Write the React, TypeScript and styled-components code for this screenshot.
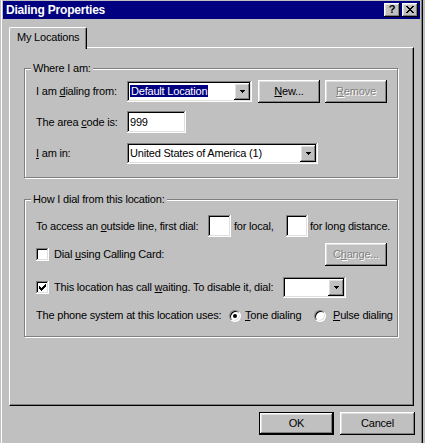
import React from "react";
import styled, { createGlobalStyle, css } from "styled-components";

const GlobalStyle = createGlobalStyle`
  html, body {
    margin: 0;
    padding: 0;
    background: #c0c0c0;
  }
  body {
    font-family: "Liberation Sans", Arial, sans-serif;
    font-size: 11px;
    letter-spacing: -0.2px;
    color: #000;
  }
  * {
    box-sizing: border-box;
  }
`;

const raised = css`
  box-shadow: inset -1px -1px #000, inset 1px 1px #fff, inset -2px -2px #808080,
    inset 2px 2px #dfdfdf;
`;

const sunken = css`
  box-shadow: inset -1px -1px #fff, inset 1px 1px #808080, inset -2px -2px #dfdfdf,
    inset 2px 2px #000;
`;

const Window = styled.div`
  width: 423px;
  height: 443px;
  overflow: hidden;
  background: #c0c0c0;
  padding: 1px 3px 0 3px;
  box-shadow: inset -1px 0 #000, inset -2px 0 #808080, inset 1px 0 #c0c0c0, inset 2px 0 #fff;
`;

const TitleBar = styled.div`
  height: 18px;
  background: #000080;
  color: #fff;
  display: flex;
  align-items: center;
  padding: 0 2px 0 3px;
`;

const Title = styled.span`
  flex: 1;
  font-size: 12px;
  font-weight: bold;
  letter-spacing: -0.2px;
`;

const CaptionButton = styled.div<{ $ml?: number }>`
  width: 16px;
  height: 14px;
  margin-left: ${(p) => p.$ml ?? 0}px;
  background: #c0c0c0;
  ${raised};
  display: flex;
  align-items: center;
  justify-content: center;
  color: #000;
  font-size: 11px;
  font-weight: bold;
  line-height: 1;
  padding-bottom: 1px;
`;

const Content = styled.div`
  padding: 8px 6px 0 6px;
`;

const TabStrip = styled.div`
  display: flex;
  height: 20px;
  position: relative;
  z-index: 1;
`;

const Tab = styled.div`
  width: 78px;
  height: 22px;
  background: #c0c0c0;
  border-top: 1px solid #fff;
  border-left: 1px solid #fff;
  border-right: 1px solid #000;
  border-top-left-radius: 2px;
  border-top-right-radius: 2px;
  box-shadow: inset -1px 0 #808080;
  padding: 3px 0 0 7px;
  line-height: 13px;
`;

const Panel = styled.div`
  height: 359px;
  border-top: 1px solid #fff;
  border-left: 1px solid #fff;
  border-right: 1px solid #000;
  border-bottom: 1px solid #000;
  box-shadow: inset -1px -1px #808080;
  padding: 20px 15px 0 14px;
`;

const Group = styled.div<{ $h: number; $mt?: number; $pt: number }>`
  position: relative;
  width: 374px;
  height: ${(p) => p.$h}px;
  margin-top: ${(p) => p.$mt ?? 0}px;
  border: 1px solid #808080;
  box-shadow: inset 1px 1px #fff, 1px 1px #fff;
  padding: ${(p) => p.$pt}px 10px 0 11px;
`;

const Legend = styled.span`
  position: absolute;
  top: -7px;
  left: 6px;
  padding: 0 2px;
  background: #c0c0c0;
  line-height: 13px;
  white-space: nowrap;
`;

const Row = styled.div<{ $h: number; $mt?: number }>`
  display: flex;
  align-items: center;
  height: ${(p) => p.$h}px;
  margin-top: ${(p) => p.$mt ?? 0}px;
`;

const Label = styled.span<{ $w?: number; $ml?: number }>`
  flex: none;
  white-space: nowrap;
  line-height: 13px;
  ${(p) => p.$w !== undefined && `width: ${p.$w}px;`}
  ${(p) => p.$ml !== undefined && `margin-left: ${p.$ml}px;`}
`;

const U = styled.span`
  text-decoration: underline;
  text-underline-offset: 1px;
`;

const Edit = styled.div<{ $w: number; $h?: number }>`
  flex: none;
  width: ${(p) => p.$w}px;
  height: ${(p) => p.$h ?? 21}px;
  background: #fff;
  ${sunken};
  display: flex;
  align-items: center;
  padding: 0 3px;
  line-height: 13px;
`;

const Combo = styled.div<{ $w: number; $ml?: number }>`
  flex: none;
  width: ${(p) => p.$w}px;
  height: 21px;
  margin-left: ${(p) => p.$ml ?? 0}px;
  background: #fff;
  ${sunken};
  display: flex;
  align-items: center;
  padding: 2px;
`;

const ComboText = styled.div`
  flex: 1;
  padding-left: 1px;
  line-height: 13px;
  white-space: nowrap;
  overflow: hidden;
`;

const Selected = styled.span`
  background: #000080;
  color: #fff;
  padding: 0 1px;
`;

const DropButton = styled.div`
  width: 16px;
  height: 17px;
  background: #c0c0c0;
  ${raised};
  display: flex;
  align-items: center;
  justify-content: center;
`;

const Button = styled.div<{ $w: number; $ml?: number; $disabled?: boolean; $default?: boolean }>`
  flex: none;
  width: ${(p) => p.$w}px;
  height: 23px;
  margin-left: ${(p) => (p.$ml === undefined ? "0" : p.$ml < 0 ? "auto" : `${p.$ml}px`)};
  background: #c0c0c0;
  ${raised};
  display: flex;
  align-items: center;
  justify-content: center;
  line-height: 13px;
  color: ${(p) => (p.$disabled ? "#808080" : "#000")};
  text-shadow: ${(p) => (p.$disabled ? "1px 1px 0 #fff" : "none")};
  ${(p) =>
    p.$default &&
    css`
      border: 1px solid #000;
    `}
`;

const CheckBox = styled.div`
  flex: none;
  width: 13px;
  height: 13px;
  background: #fff;
  ${sunken};
  display: flex;
  align-items: center;
  justify-content: center;
`;

const Radio = styled.div<{ $ml?: number }>`
  flex: none;
  width: 12px;
  height: 12px;
  margin-left: ${(p) => p.$ml ?? 0}px;
  border-radius: 50%;
  background: #fff;
  border: 1px solid;
  border-color: #808080 #fff #fff #808080;
  box-shadow: inset 1px 1px #000, inset -1px -1px #dfdfdf;
  display: flex;
  align-items: center;
  justify-content: center;
`;

const Dot = styled.div`
  width: 4px;
  height: 4px;
  border-radius: 50%;
  background: #000;
`;

const ButtonRow = styled.div`
  display: flex;
  justify-content: flex-end;
  gap: 6px;
  margin-top: 6px;
  margin-right: -1px;
`;

const pixels = (rows: string[]) =>
  rows.flatMap((r, y) =>
    r.split("").map((c, x) => (c === "X" ? <rect key={`${x}-${y}`} x={x} y={y} width={1} height={1} /> : null))
  );

const Glyph = ({ rows }: { rows: string[] }) => (
  <svg width={rows[0].length} height={rows.length} shapeRendering="crispEdges" fill="#000">
    {pixels(rows)}
  </svg>
);

const CLOSE = ["XX....XX", ".XX..XX.", "..XXXX..", "...XX...", "..XXXX..", ".XX..XX.", "XX....XX"];
const ARROW = ["XXXXX", ".XXX.", "..X.."];
const CHECK = ["......X", ".....XX", "X...XXX", "XX.XXX.", "XXXXX..", ".XXX...", "..X...."];

const Drop = () => (
  <DropButton>
    <Glyph rows={ARROW} />
  </DropButton>
);

const App: React.FC = () => {
  return (
    <>
      <GlobalStyle />
      <Window>
        <TitleBar>
          <Title>Dialing Properties</Title>
          <CaptionButton>?</CaptionButton>
          <CaptionButton $ml={2}>
            <Glyph rows={CLOSE} />
          </CaptionButton>
        </TitleBar>
        <Content>
          <TabStrip>
            <Tab>My Locations</Tab>
          </TabStrip>
          <Panel>
            <Group $h={110} $pt={11}>
              <Legend>Where I am:</Legend>
              <Row $h={23}>
                <Label $w={91}>
                  I am <U>d</U>ialing from:
                </Label>
                <Combo $w={125}>
                  <ComboText>
                    <Selected>Default Location</Selected>
                  </ComboText>
                  <Drop />
                </Combo>
                <Button $w={62} $ml={6}>
                  <span>
                    <U>N</U>ew...
                  </span>
                </Button>
                <Button $w={62} $ml={5} $disabled>
                  <span>
                    <U>R</U>emove
                  </span>
                </Button>
              </Row>
              <Row $h={22} $mt={8}>
                <Label $w={91}>
                  The area <U>c</U>ode is:
                </Label>
                <Edit $w={59} $h={22}>
                  999
                </Edit>
              </Row>
              <Row $h={21} $mt={10}>
                <Label $w={91}>
                  <U>I</U> am in:
                </Label>
                <Combo $w={191}>
                  <ComboText>United States of America (1)</ComboText>
                  <Drop />
                </Combo>
              </Row>
            </Group>

            <Group $h={138} $mt={21} $pt={15}>
              <Legend>How I dial from this location:</Legend>
              <Row $h={22}>
                <Label $w={172}>
                  To access an <U>o</U>utside line, first dial:
                </Label>
                <Edit $w={23} $h={22} />
                <Label $w={55} style={{ paddingLeft: 3 }}>
                  for local,
                </Label>
                <Edit $w={22} $h={22} />
                <Label $ml={2}>for long distance.</Label>
              </Row>
              <Row $h={23} $mt={6}>
                <CheckBox />
                <Label $ml={5}>
                  Dial <U>u</U>sing Calling Card:
                </Label>
                <Button $w={62} $ml={-1} $disabled>
                  <span>
                    C<U>h</U>ange...
                  </span>
                </Button>
              </Row>
              <Row $h={21} $mt={11}>
                <CheckBox>
                  <Glyph rows={CHECK} />
                </CheckBox>
                <Label $w={229} $ml={5}>
                  This location has call <U>w</U>aiting. To disable it, dial:
                </Label>
                <Combo $w={63}>
                  <ComboText />
                  <Drop />
                </Combo>
              </Row>
              <Row $h={13} $mt={11}>
                <Label $w={193}>The phone system at this location uses:</Label>
                <Radio>
                  <Dot />
                </Radio>
                <Label $w={69} $ml={4}>
                  <U>T</U>one dialing
                </Label>
                <Radio />
                <Label $ml={7}>
                  <U>P</U>ulse dialing
                </Label>
              </Row>
            </Group>
          </Panel>
          <ButtonRow>
            <Button $w={75} $default>
              OK
            </Button>
            <Button $w={75}>Cancel</Button>
          </ButtonRow>
        </Content>
      </Window>
    </>
  );
};

export default App;
